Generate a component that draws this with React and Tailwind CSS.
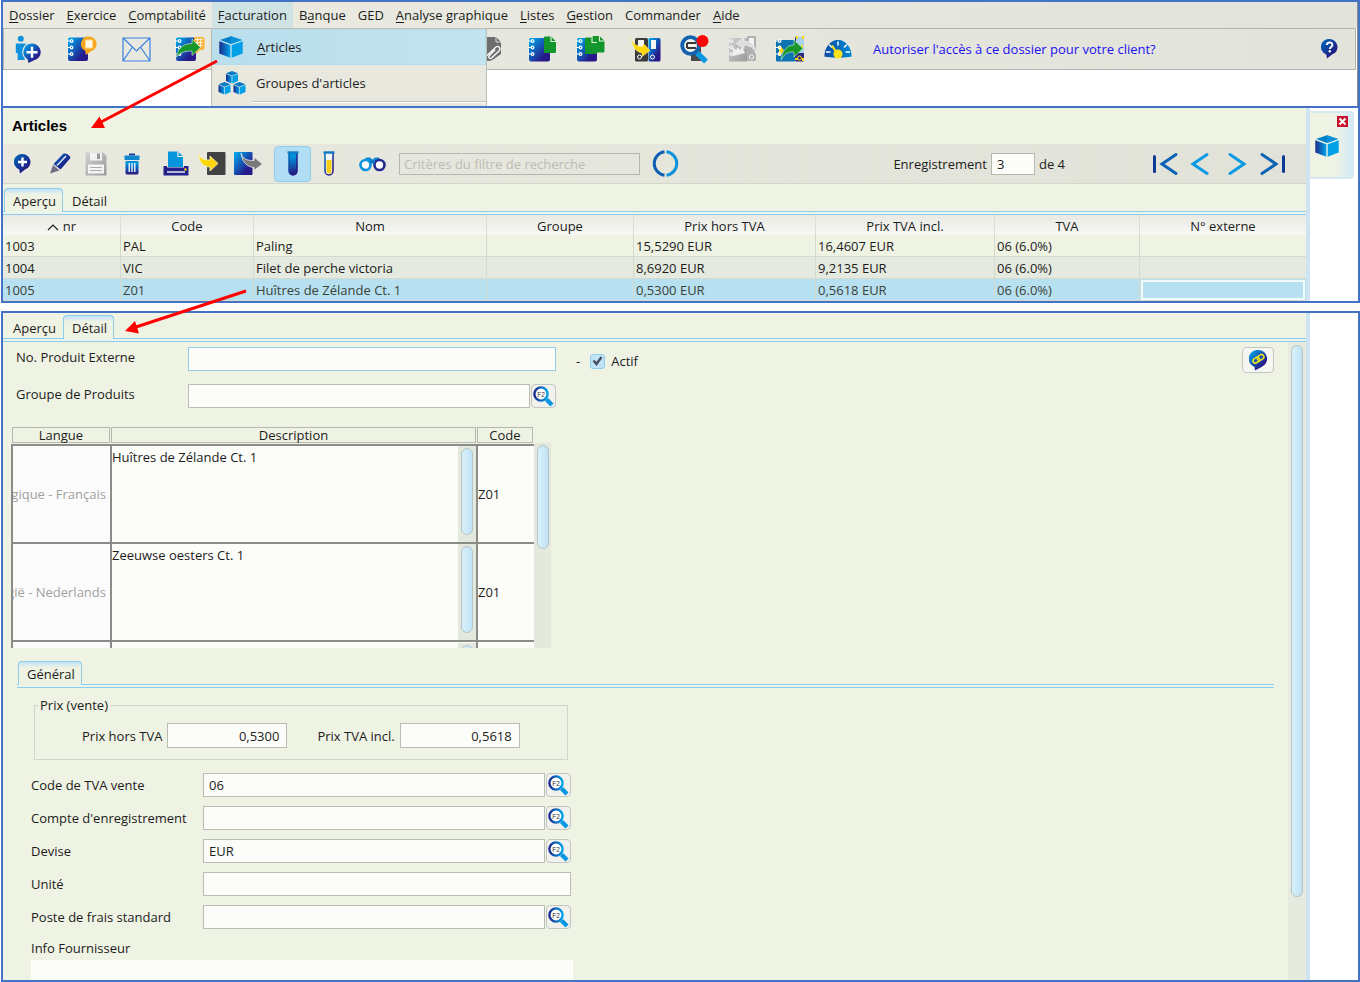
import React, { useState } from "react";

const MENUS = [
  { label: "Dossier", key: 0 },
  { label: "Exercice", key: 0 },
  { label: "Comptabilité", key: 0 },
  { label: "Facturation", key: 0, open: true },
  { label: "Banque", key: 1 },
  { label: "GED" },
  { label: "Analyse graphique", key: 0 },
  { label: "Listes", key: 0 },
  { label: "Gestion", key: 0 },
  { label: "Commander" },
  { label: "Aide", key: 0 },
];

const COLUMNS = [
  { label: "nr", width: "w-[118px]", sorted: true },
  { label: "Code", width: "w-[133px]" },
  { label: "Nom", width: "w-[233px]" },
  { label: "Groupe", width: "w-[147px]" },
  { label: "Prix hors TVA", width: "w-[182px]" },
  { label: "Prix TVA incl.", width: "w-[179px]" },
  { label: "TVA", width: "w-[145px]" },
  { label: "N° externe", width: "w-auto" },
];

const ARTICLES = [
  ["1003", "PAL", "Paling", "", "15,5290 EUR", "16,4607 EUR", "06 (6.0%)", ""],
  ["1004", "VIC", "Filet de perche victoria", "", "8,6920 EUR", "9,2135 EUR", "06 (6.0%)", ""],
  ["1005", "Z01", "Huîtres de Zélande Ct. 1", "", "0,5300 EUR", "0,5618 EUR", "06 (6.0%)", ""],
];

const DESCRIPTIONS = [
  { lang: "Belgique - Français", text: "Huîtres de Zélande Ct. 1", code: "Z01" },
  { lang: "België - Nederlands", text: "Zeeuwse oesters Ct. 1", code: "Z01" },
  { lang: "", text: "", code: "" },
];

const FIELDS = [
  { id: "tva", label: "Code de TVA vente", value: "06", lookup: true },
  { id: "compte", label: "Compte d'enregistrement", value: "", lookup: true },
  { id: "devise", label: "Devise", value: "EUR", lookup: true },
  { id: "unite", label: "Unité", value: "" },
  { id: "frais", label: "Poste de frais standard", value: "", lookup: true },
];

/* ---------- icons ---------- */

// shared gradients, referenced by every icon below
const Gradients = () => (
  <svg className="absolute h-0 w-0" aria-hidden="true">
    <defs>
      <linearGradient id="blue" x1="0" y1="0" x2="1" y2="1">
        <stop offset="0.1" stopColor="#009ee6" />
        <stop offset="0.75" stopColor="#26198a" />
      </linearGradient>
      <linearGradient id="deep" x1="0" y1="0" x2="1" y2="1">
        <stop offset="0" stopColor="#0070bf" />
        <stop offset="0.8" stopColor="#23157f" />
      </linearGradient>
      <linearGradient id="side" x1="0" y1="0" x2="1" y2="0">
        <stop offset="0" stopColor="#1b2c8c" />
        <stop offset="1" stopColor="#00a3ea" />
      </linearGradient>
      <linearGradient id="down" x1="0" y1="0" x2="0" y2="1">
        <stop offset="0.2" stopColor="#0090d8" />
        <stop offset="1" stopColor="#2b1580" />
      </linearGradient>
      <linearGradient id="gray" x1="0" y1="0" x2="1" y2="1">
        <stop offset="0" stopColor="#d2d2d2" />
        <stop offset="1" stopColor="#9a9a9a" />
      </linearGradient>
    </defs>
  </svg>
);

const Svg = ({ w, h, children }) => (
  <svg width={w} height={h} viewBox={`0 0 ${w} ${h}`} fill="none" aria-hidden="true">
    {children}
  </svg>
);

const Rings = ({ color = "#fff" }) => (
  <g stroke={color} strokeWidth="1.2" fill="none">
    <path d="M0 5h3.5M0 11.500h3.500M0 18h3.500" />
    <circle cx="4.600" cy="5" r="1.300" />
    <circle cx="4.600" cy="11.500" r="1.300" />
    <circle cx="4.600" cy="18" r="1.300" />
  </g>
);

const CubeIcon = ({ w = 24, h = 22 }) => (
  <svg width={w} height={h} viewBox="0 0 24 22" fill="none" aria-hidden="true">
    <path d="M12 0.300 23 4 12 8 1 4Z" fill="#0080c8" />
    <path d="M12 0.300 23 4 12 8Z" fill="#0a93db" />
    <path d="M0.300 5.300 11.300 9.200V21.700L0.300 17.500Z" fill="url(#side)" />
    <path d="M12.700 9.200 23.700 5.300V17.500L12.700 21.700Z" fill="#00a0e9" />
  </svg>
);

const CubesIcon = () => (
  <Svg w={28} h={24}>
    {[[8, 0], [0.500, 11], [15.500, 11]].map(([x, y]) => (
      <g key={x} transform={`translate(${x} ${y})`}>
        <path d="M6 0 12 2.300 6 4.800 0 2.300Z" fill="#0b7ac4" />
        <path d="M0 3 5.700 5.300V12.500L0 10Z" fill="url(#side)" />
        <path d="M6.300 5.300 12 3V10L6.300 12.500Z" fill="#00a0e9" />
      </g>
    ))}
  </Svg>
);

const PersonAddIcon = () => (
  <Svg w={26} h={28}>
    <circle cx="5.800" cy="3.800" r="3" fill="#1292dc" />
    <path d="M0.800 8.500h10l-1 9.500v7H2.600v-7H0.800Z" fill="#1292dc" />
    <circle cx="17" cy="17" r="9.800" fill="#e8e8df" />
    <path d="M17 8.500a8.500 8.500 0 0 1 1.500 16.900L13.500 28l-1-3.800A8.500 8.500 0 0 1 17 8.500Z" fill="url(#blue)" />
    <path d="M17 11.800v11M11.500 17.300h11" stroke="#fff" strokeWidth="2.400" />
  </Svg>
);

const NotebookNoteIcon = () => (
  <Svg w={30} h={26}>
    <rect x="1" y="1.500" width="20" height="23.500" rx="2" fill="url(#blue)" />
    <Rings />
    <path d="M22 0.500a7.500 7.500 0 0 1 2.500 14.600L19 19l-1-4.400A7.500 7.500 0 0 1 22 0.500Z" fill="#f6a51c" />
    <path d="M18.500 4h7v8h-7Z" fill="#fff8e6" stroke="#ffd98a" />
  </Svg>
);

const MailIcon = () => (
  <Svg w={29} h={25}>
    <path d="M1 1h27v23H1ZM1 1l13.500 13L28 1M1 24l9.500-14M28 24l-9.500-14" stroke="#3b82e0" strokeWidth="1.200" />
  </Svg>
);

const NotebookSendIcon = () => (
  <Svg w={30} h={26}>
    <rect x="1" y="1.500" width="20" height="23.500" rx="2" fill="url(#blue)" />
    <Rings />
    <path d="M19 1h8a2.500 2.500 0 0 1 2.500 2.500V11a3 3 0 0 1-3 3H25l-4 4-1-4h-1Z" fill="#f9b233" />
    <path d="M20 3.500h8M20 6.500h8M20 9.500h8M22.500 2v9M25.500 2v9" stroke="#fff" strokeWidth="0.800" />
    <path d="M1 21.500C3 12 8 7.500 17 7.500V3l8.500 8.500-8.500 8V15C10.500 15 5 16 1 21.500Z" fill="#17962c" stroke="#e9f6e6" strokeWidth="0.600" />
  </Svg>
);

const AttachIcon = () => (
  <Svg w={26} h={26}>
    <path d="M2 2h10v22H2Z" fill="url(#blue)" />
    <path d="M10 1h9l5 5v12l-7 5-4 2h-3Z" fill="#6d6d6d" />
    <path d="M19 1v5h5" stroke="#ddd" />
    <path d="M10 19.500 19 11a2.500 2.500 0 0 1 3.500 3.500l-8 7.500a1.600 1.600 0 0 1-2.300-2.300l6-6" stroke="#fff" strokeWidth="1.300" />
  </Svg>
);

const Page = ({ x, y }) => (
  <g transform={`translate(${x} ${y})`}>
    <path d="M0 1a1 1 0 0 1 1-1h6l5 5v10a1.500 1.500 0 0 1-1.500 1.500H0Z" fill="#12962b" />
    <path d="M7 0v5h5" stroke="#e2f2e0" strokeWidth="1.100" />
  </g>
);

const NotebookPageIcon = () => (
  <Svg w={29} h={26}>
    <rect x="1" y="2" width="21" height="23.500" rx="2" fill="url(#blue)" />
    <Rings />
    <Page x={16} y={0.500} />
  </Svg>
);

const NotebookPagesIcon = () => (
  <Svg w={29} h={26}>
    <rect x="1" y="2" width="20" height="23.500" rx="2" fill="url(#blue)" />
    <Rings />
    <Page x={16.500} y={0} />
    <Page x={9} y={1.500} />
  </Svg>
);

const BinderImportIcon = () => (
  <Svg w={30} h={26}>
    <rect x="4" y="2" width="13" height="23.500" rx="1.500" fill="#3b3b3b" />
    <rect x="17.500" y="2" width="12" height="23.500" rx="1.500" fill="url(#blue)" />
    <path d="M7 4h6v8H7ZM20 4h5v9h-5Z" fill="#f5f5f5" />
    <circle cx="8.500" cy="21" r="2" stroke="#fff" />
    <circle cx="21.500" cy="21" r="2" stroke="#fff" />
    <path d="M0.500 2C2 8.500 6 10.500 12 10.500V7l7 7.500-8 6V17C5 16 1 11 0.500 2Z" fill="#ffd60a" stroke="#fff3b0" strokeWidth="0.500" />
  </Svg>
);

const SearchAlertIcon = () => (
  <Svg w={29} h={29}>
    <path d="M11 7h10v19H11Z" fill="#4a4a4a" />
    <circle cx="10.500" cy="10.500" r="8.300" fill="#f2f2ee" stroke="#1362ae" strokeWidth="3.800" />
    <path d="M7 8h9M7 13h9M7 8v5" stroke="#3a3a3a" strokeWidth="2" />
    <path d="m17 18 9 8.500" stroke="#0a97e2" strokeWidth="5.500" />
    <circle cx="22.500" cy="6" r="6" fill="#fb0505" />
  </Svg>
);

const ReturnIcon = () => (
  <Svg w={30} h={26}>
    <rect x="2" y="2" width="18" height="23.500" rx="1" fill="url(#gray)" />
    <rect x="20" y="0" width="9" height="25" rx="1" fill="#b0b0b0" />
    <path d="M22 2h5v9h-5Z" fill="#f4f4f4" />
    <circle cx="24.500" cy="21" r="2.200" stroke="#f4f4f4" />
    <Rings color="#f0f0f0" />
    <path d="M6 20V11l3 3 2-3 2 3 2-3 3 6" fill="#f1f1f1" />
    <path d="M29 18C27 11 22 9 17 9.500V13L9 7.500 17 1v4c7 0 12 4 12 13Z" fill="#dedede" stroke="#f4f4f4" strokeWidth="0.500" />
  </Svg>
);

const TransferIcon = () => (
  <Svg w={30} h={26}>
    <rect x="1" y="4" width="19" height="21.500" rx="1" fill="#0d74b2" />
    <rect x="20" y="1" width="9" height="24.500" rx="1" fill="#2a2a86" />
    <path d="M4 20V9l5 5-4 6Z" fill="#ffd60a" />
    <path d="M21 1h8v16h-8Z" fill="#a9d3ec" />
    <path d="M22 0v3M28 0v3M27 9v3M20 23h3M28 22v3" stroke="#ffd60a" strokeWidth="2" />
    <circle cx="24.500" cy="22" r="2" stroke="#ffd60a" />
    <Rings />
    <path d="M6 24C8 13 13 9 19 9V4l9 8.500-9 8.500V16C14 15.500 10 17 6 24Z" fill="#17962c" stroke="#d7f0d5" strokeWidth="0.600" />
  </Svg>
);

const GaugeIcon = () => (
  <Svg w={28} h={20}>
    <path d="M0.500 17.500a13.500 16.500 0 0 1 27 0c-8 1.500-19 1.500-27 0Z" fill="url(#side)" />
    <path d="M0.500 17.500a13.500 16.500 0 0 1 27 0c-8 1.500-19 1.500-27 0Z" fill="#0070c0" opacity="0.500" />
    <path d="M2 13h4.500M5 5.500l3 3M14 2.500v4M23 5.500l-3 3M26 13h-4.500" stroke="#fff" strokeWidth="1.500" />
    <path d="m8 6.500 5 8" stroke="#ffe11a" strokeWidth="2.200" />
    <circle cx="14" cy="15" r="4.500" fill="#ffe11a" />
  </Svg>
);

const Bubble = ({ fill = "url(#deep)" }) => (
  <path d="M8.500 0a8 8 0 0 1 2.500 15.600L6 19.500l-0.800-4A8 8 0 0 1 8.500 0Z" fill={fill} />
);

const HelpIcon = () => (
  <Svg w={17} h={20}>
    <Bubble />
    <path d="M5.800 6c0-3.400 5.600-3.400 5.600 0 0 2-2.600 2-2.600 4" stroke="#fff" strokeWidth="1.900" />
    <circle cx="8.800" cy="12.300" r="1.200" fill="#fff" />
  </Svg>
);

const AddIcon = () => (
  <Svg w={17} h={20}>
    <Bubble />
    <path d="M8.500 3.500v9M4 8h9" stroke="#fff" strokeWidth="2.400" />
  </Svg>
);

const LinkBubbleIcon = () => (
  <Svg w={19} h={21}>
    <path d="M9.500 0a8.800 8.800 0 0 1 3 17L6 20.500 5.500 17A8.800 8.800 0 0 1 9.500 0Z" fill="url(#blue)" />
    <g stroke="#e9e31e" strokeWidth="1.600" transform="rotate(-32 9.500 9)">
      <rect x="3.500" y="6.500" width="7" height="4.600" rx="2.300" />
      <rect x="8.500" y="6.500" width="7" height="4.600" rx="2.300" />
    </g>
  </Svg>
);

const PencilIcon = () => (
  <Svg w={21} h={21}>
    <path d="M0 20.500 3 12l6.500 5.500Z" fill="#6f6f86" />
    <path d="m3.500 11 9.500-10c3-1.500 7 1.500 7.500 4L10.500 16.500Z" fill="url(#deep)" />
    <path d="m7 12.500 9-9.500" stroke="#dfe9f5" strokeWidth="1.500" />
  </Svg>
);

const SaveIcon = () => (
  <Svg w={22} h={24}>
    <path d="M0.500 0.500H18l3.500 3.500v19.500h-21Z" fill="url(#gray)" />
    <path d="M5 0.500h12v8H5Z" fill="#f1f1f1" />
    <path d="M12 1.500h3v5.500h-3Z" fill="#9a9a9a" />
    <path d="M3 12.500h16v9H3Z" fill="#f4f4f4" />
    <path d="M5 15.500h12M5 18.500h12" stroke="#ababab" />
  </Svg>
);

const TrashIcon = () => (
  <Svg w={16} h={22}>
    <path d="M5 0.500h6v2H5Z" fill="#1d3a9a" />
    <path d="M0.500 2.500h15V7h-15Z" fill="#1285cf" />
    <path d="M1.500 8h13V20a1.500 1.500 0 0 1-1.500 1.500H3A1.500 1.500 0 0 1 1.500 20Z" fill="url(#down)" />
    <path d="M5.200 10v9M8 10v9M10.800 10v9" stroke="#fff" strokeWidth="1.300" />
  </Svg>
);

const PrintIcon = () => (
  <Svg w={26} h={25}>
    <path d="M5 0.500h10l5 5V16H5Z" fill="#0695dc" />
    <path d="M15 0.500v5h5" stroke="#e5f2f8" strokeWidth="1.200" />
    <path d="M0.500 15H4v1.500h17V15h4.500v9.500h-25Z" fill="#24208c" />
    <path d="M4 21h18" stroke="#e7e9ef" strokeWidth="1.500" />
    <circle cx="22.500" cy="18.500" r="1.200" fill="#ffd60a" />
  </Svg>
);

const ImportIcon = () => (
  <Svg w={28} h={23}>
    <rect x="9" y="0" width="18.500" height="23" rx="1" fill="#424242" />
    <path d="M0 1C2 7 6 8 12 8V4l8 7.500-8 7.500V15C5 15 1 10 0 1Z" fill="#ffd60a" stroke="#f6f1c4" strokeWidth="0.800" />
  </Svg>
);

const ExportIcon = () => (
  <Svg w={29} h={23}>
    <rect x="0" y="0" width="18.500" height="23" rx="1" fill="url(#blue)" />
    <path d="M7 1c2 6 5 7.500 13 7.500V5l8.500 7-8.500 6.500V15.500C13 15 8 10 7 1Z" fill="#7a7a7a" stroke="#eee" strokeWidth="0.800" />
  </Svg>
);

const TubeIcon = ({ yellow }) => (
  <Svg w={12} h={25}>
    <path d="M2 1.500V20a4 4 0 0 0 8 0V1.500Z" fill={yellow ? "#f3f6f2" : "url(#down)"} stroke="url(#deep)" strokeWidth="1.500" />
    {yellow && <path d="M3.500 9h5v11a2.500 2.500 0 0 1-5 0Z" fill="#f5cf15" />}
    <path d="M0.500 1.500h11" stroke="#0f7cc4" strokeWidth="2.200" />
  </Svg>
);

const BinocularsIcon = () => (
  <Svg w={27} h={16}>
    <path d="M7 1.500h4l2.500 2L16 1.500h4l2 4H5Z" fill="#0f8ad4" />
    <circle cx="6.500" cy="9" r="5" fill="#fff" stroke="#0b93dc" strokeWidth="2.600" />
    <circle cx="20.500" cy="9" r="5" fill="#fff" stroke="#262a92" strokeWidth="2.600" />
    <path d="M11 6h5" stroke="#1276c4" strokeWidth="3" />
  </Svg>
);

const RefreshIcon = () => (
  <Svg w={27} h={27}>
    <path d="M12.500 1.800a11.800 11.800 0 0 0 0 23.400" stroke="#0f5fb0" strokeWidth="3" />
    <path d="M14.500 1.800a11.800 11.800 0 0 1 0 23.400" stroke="#0b93dc" strokeWidth="3" />
  </Svg>
);

const NavIcon = ({ back, end }) => (
  <Svg w={26} h={24}>
    <g transform={back ? undefined : "matrix(-1 0 0 1 26 0)"} strokeLinecap="round" strokeWidth="3">
      {end && <path d="M2.500 4.500v15" stroke="#0c3a97" />}
      <path d="M24 2.500 10 12l14 9.500" stroke={end ? "#0a62b4" : "#0b9ae3"} />
    </g>
  </Svg>
);

const LookupIcon = () => (
  <Svg w={21} h={21}>
    <path d="m13.500 13.500 5.500 5.500" stroke="#0797e2" strokeWidth="4.400" />
    <circle cx="8" cy="8" r="6.600" fill="#fff" stroke="url(#side)" strokeWidth="2.400" />
    <text x="8" y="10.500" textAnchor="middle" fontSize="6.500" fontFamily="Liberation Sans, sans-serif" fill="#333">F2</text>
  </Svg>
);

/* ---------- small building blocks ---------- */

const IconButton = ({ label, className = "", children }) => (
  <button type="button" aria-label={label} className={`flex shrink-0 items-center justify-center ${className}`}>
    {children}
  </button>
);

const Mnemonic = ({ text, at }) => {
  if (at === undefined) return text;
  return (
    <>
      {text.slice(0, at)}
      <u className="underline-offset-2">{text[at]}</u>
      {text.slice(at + 1)}
    </>
  );
};

const inputStyle = "h-6 min-w-0 border border-[#b9bdb4] bg-[#fcfdf9] px-[5px] text-[13px] outline-none";

const Tabs = ({ items, active, onSelect }) => (
  <div className="border-b border-[#8fcdea]">
    <div className="flex h-6 border-b border-[#8fcdea] pl-px">
      {items.map((t) => (
        <button
          key={t}
          type="button"
          onClick={() => onSelect?.(t)}
          className={
            t === active
              ? "-mb-px h-6 rounded-t border border-b-0 border-[#8fcdea] bg-linear-to-b from-[#bfe4f5] to-[#eff3e4] to-25% pr-[6px] pl-2"
              : "h-6 pt-px pr-[7px] pl-[9px]"
          }
        >
          {t}
        </button>
      ))}
    </div>
    <div className="h-0.5 bg-[#e9f4ee]" />
  </div>
);

const Thumb = ({ className }) => (
  <div className={`w-3 rounded-full border border-[#b5c4c6] bg-linear-to-r from-[#d9f0fb] to-[#bfe3f4] ${className}`} />
);

const LookupButton = ({ label }) => (
  <IconButton label={label} className="ml-px h-6 w-[25px] rounded-sm border border-[#c3c6c0] bg-[#f1f2ee]">
    <LookupIcon />
  </IconButton>
);

/* ---------- page parts ---------- */

const MainWindow = () => (
  <section className="relative border-2 border-[#4472c4] bg-white">
    <div className="border-r border-[#8f8f8f]">
      <nav className="flex h-[26px] bg-linear-to-r from-[#ebebe2] to-[#e2e3da]">
        {MENUS.map((m) => (
          <button
            key={m.label}
            type="button"
            className={m.open ? "bg-[#cfe3e4] px-[6px]" : "px-[6px]"}
          >
            <Mnemonic text={m.label} at={m.key} />
          </button>
        ))}
      </nav>
      <div className="mr-px flex h-[42px] items-center border border-[#b4b5ae] bg-linear-to-r from-[#e9e9e0] to-[#e2e3da]">
        <IconButton label="Ajouter un client" className="w-12"><PersonAddIcon /></IconButton>
        <IconButton label="Note" className="ml-[3px] w-[54px]"><NotebookNoteIcon /></IconButton>
        <IconButton label="Courrier" className="w-[54px]"><MailIcon /></IconButton>
        <IconButton label="Envoyer" className="w-[54px]"><NotebookSendIcon /></IconButton>
        <IconButton label="Pièce jointe" className="ml-[249px] w-12"><AttachIcon /></IconButton>
        <IconButton label="Document" className="ml-1 w-12"><NotebookPageIcon /></IconButton>
        <IconButton label="Documents" className="w-12"><NotebookPagesIcon /></IconButton>
        <IconButton label="Importer" className="ml-2 w-12"><BinderImportIcon /></IconButton>
        <IconButton label="Contrôle" className="w-12"><SearchAlertIcon /></IconButton>
        <IconButton label="Retour" className="w-12"><ReturnIcon /></IconButton>
        <IconButton label="Transfert" className="w-12"><TransferIcon /></IconButton>
        <IconButton label="Tableau de bord" className="w-12"><GaugeIcon /></IconButton>
        <a href="#acces" className="ml-[11px] flex-1 text-[#1d10f5]">
          Autoriser l'accès à ce dossier pour votre client?
        </a>
        <IconButton label="Aide" className="mr-[17px]"><HelpIcon /></IconButton>
      </div>
      <div className="h-9" />
    </div>

    {/* opened "Facturation" menu */}
    <div className="absolute top-[26px] left-[208px] h-[78px] w-[276px] overflow-hidden border border-b-0 border-[#bdbeb6] bg-[#e8e8df]">
      <button type="button" className="flex h-9 w-full items-center border border-[#b5dceb] bg-linear-to-r from-[#b9deec] to-[#c3e3ef] pl-[6px]">
        <span className="w-[38px]"><CubeIcon /></span>
        <Mnemonic text="Articles" at={0} />
      </button>
      <button type="button" className="flex h-9 w-full items-center pl-[6px]">
        <span className="w-[38px]"><CubesIcon /></span>
        Groupes d'articles
      </button>
      <div className="ml-10 border-t border-[#c3c4bc] bg-white pt-px" />
    </div>
  </section>
);

const Toolbar = () => (
  <div className="flex h-10 items-center border-b border-[#d6d7cc] bg-linear-to-r from-[#e9e9e0] to-[#e1e2d8]">
    <IconButton label="Nouveau" className="w-[39px]"><AddIcon /></IconButton>
    <IconButton label="Modifier" className="w-9"><PencilIcon /></IconButton>
    <IconButton label="Enregistrer" className="w-9"><SaveIcon /></IconButton>
    <IconButton label="Supprimer" className="w-9"><TrashIcon /></IconButton>
    <IconButton label="Imprimer" className="ml-2 w-9"><PrintIcon /></IconButton>
    <IconButton label="Importer" className="w-9"><ImportIcon /></IconButton>
    <IconButton label="Exporter" className="w-9"><ExportIcon /></IconButton>
    <IconButton label="Articles actifs" className="ml-2 h-9 w-[37px] rounded-sm border border-[#8fcdea] bg-[#b2def5]">
      <TubeIcon />
    </IconButton>
    <IconButton label="Tous les articles" className="w-9"><TubeIcon yellow /></IconButton>
    <IconButton label="Rechercher" className="ml-[6px] w-[38px]"><BinocularsIcon /></IconButton>
    <input
      type="text"
      aria-label="Filtre"
      placeholder="Critères du filtre de recherche"
      className="ml-2 h-[22px] w-[241px] border border-[#b6b8b0] px-1 text-[13px] outline-none placeholder:text-[#bcbdb8]"
    />
    <IconButton label="Actualiser" className="ml-3"><RefreshIcon /></IconButton>
    <div className="ml-auto flex items-center">
      <label htmlFor="record">Enregistrement</label>
      <input id="record" type="text" defaultValue="3" className="mx-1 h-[22px] w-11 border border-[#b6b8b0] bg-[#fcfdf9] px-[5px] text-[13px] outline-none" />
      <span>de 4</span>
    </div>
    <div className="mr-5 ml-[87px] flex">
      <IconButton label="Premier"><NavIcon back end /></IconButton>
      <IconButton label="Précédent" className="ml-[5px]"><NavIcon back /></IconButton>
      <IconButton label="Suivant" className="ml-[19px]"><NavIcon /></IconButton>
      <IconButton label="Dernier" className="ml-[6px]"><NavIcon end /></IconButton>
    </div>
  </div>
);

const ArticlesTable = () => (
  <table className="w-full table-fixed border-separate border-spacing-0">
    <thead>
      <tr className="h-5 bg-linear-to-b from-[#e9eae3] to-[#f7f8f4]">
        {COLUMNS.map((c) => (
          <th key={c.label} className={`h-5 border-r border-[#dcded5] p-0 pt-[2px] font-normal leading-[18px] last:border-r-0 ${c.width}`}>
            {c.sorted && (
              <svg className="mr-1 inline" width="12" height="7" viewBox="0 0 12 7" fill="none" aria-hidden="true">
                <path d="M1 6 6 1l5 5" stroke="#222" strokeWidth="1.200" />
              </svg>
            )}
            {c.label}
          </th>
        ))}
      </tr>
    </thead>
    <tbody>
      {ARTICLES.map((row, i) => {
        const selected = i === 2;
        const tone = selected ? "bg-[#b7e0f0] text-[#3b4238]" : i % 2 ? "bg-[#e4eadf]" : "bg-[#eff3e4]";
        return (
          <tr key={row[0]} className={tone}>
            {row.map((cell, j) => (
              <td
                key={j}
                className={`h-[22px] truncate border-r border-b border-[#d5dacd] py-0 pr-0 pl-0.5 leading-5 last:border-r-0 ${
                  selected && j === 7 ? "outline-2 -outline-offset-3 outline-[#f3fafa]" : ""
                }`}
              >
                {cell}
              </td>
            ))}
          </tr>
        );
      })}
    </tbody>
  </table>
);

const SideStrip = ({ children }) => (
  <aside className="flex w-[52px] shrink-0">
    <div className="w-1 bg-[#cfe4f2]" />
    <div className="flex-1 bg-white">{children}</div>
  </aside>
);

const ArticlesWindow = () => (
  <section className="-mt-0.5 flex border-2 border-[#4472c4]">
    <div className="min-w-0 flex-1 bg-[#eff3e4]">
      <h1 className="flex h-9 items-center pl-[9px] font-['Liberation_Sans',sans-serif] text-[15px] font-bold text-black">
        Articles
      </h1>
      <Toolbar />
      <div className="pt-1">
        <Tabs items={["Aperçu", "Détail"]} active="Aperçu" />
      </div>
      <ArticlesTable />
    </div>
    <SideStrip>
      <div className="mt-[3px] mr-1 flex h-[68px] flex-col rounded-r-sm border-2 border-l-0 border-[#d5e8f4] bg-linear-to-r from-[#eff3e4] from-60% to-[#d3ebf6]">
        <IconButton label="Fermer" className="mt-[3px] mr-1 size-[11px] self-end bg-[#c8102e]">
          <Svg w={9} h={9}>
            <path d="m1.500 1.500 6 6M7.500 1.500l-6 6" stroke="#fff" strokeWidth="2" />
          </Svg>
        </IconButton>
        <IconButton label="Articles" className="mt-2 ml-[5px] self-start"><CubeIcon /></IconButton>
      </div>
    </SideStrip>
  </section>
);

const DescriptionTable = () => (
  <div className="mt-[19px] ml-2 flex h-[221px] w-[540px] overflow-hidden">
    <table className="h-[310px] w-[522px] table-fixed border-collapse">
      <thead>
        <tr>
          {[["Langue", "w-[99px]"], ["Description", "w-[366px]"], ["Code", "w-[57px]"]].map(([h, w]) => (
            <th key={h} className={`p-0 pr-px pb-px font-normal ${w}`}>
              <div className="h-4 border border-[#b5b8af] leading-[15px]">{h}</div>
            </th>
          ))}
        </tr>
      </thead>
      <tbody>
        {DESCRIPTIONS.map((d, i) => (
          <tr key={i}>
            <td className="h-[98px] border-t-2 border-l-2 border-[#8b8c87] bg-[#fbfbfb] p-0">
              <div className="flex justify-end overflow-hidden pr-1 whitespace-nowrap text-[#9fa19f]">{d.lang}</div>
            </td>
            <td className="h-[98px] border-t-2 border-l-2 border-[#8b8c87] bg-[#fcfdf9] p-0">
              <div className="flex h-24">
                <textarea
                  aria-label="Description"
                  defaultValue={d.text}
                  className="h-full flex-1 resize-none overflow-hidden pt-px text-[13px] leading-5 outline-none"
                />
                <div className="flex w-[18px] justify-center bg-[#e4e9dd] pt-0.5">
                  <Thumb className="h-[87px]" />
                </div>
              </div>
            </td>
            <td className="h-[98px] border-t-2 border-l-2 border-[#8b8c87] bg-[#fcfdf9] p-0">
              <input type="text" aria-label="Code" defaultValue={d.code} className="w-full text-[13px] outline-none" />
            </td>
          </tr>
        ))}
      </tbody>
    </table>
    <div className="mt-4 flex w-[18px] justify-center bg-[#e4e9dd] pt-0.5">
      <Thumb className="h-[104px]" />
    </div>
  </div>
);

const PriceField = ({ id, label, value, className = "" }) => (
  <div className={`flex items-center gap-[5px] ${className}`}>
    <label htmlFor={id}>{label}</label>
    <input id={id} type="text" defaultValue={value} className="h-[25px] w-[120px] border border-[#b9bdb4] bg-[#fcfdf9] px-[7px] text-right text-[13px] outline-none" />
  </div>
);

const GeneralTab = () => (
  <div className="pl-7">
    <fieldset className="mt-[9px] ml-[3px] w-[534px] border border-[#d3d7ca] pb-[11px]">
      <legend className="ml-[3px] px-0.5 leading-4">Prix (vente)</legend>
      <div className="flex pt-[10px] pl-[47px]">
        <PriceField id="horsTva" label="Prix hors TVA" value="0,5300" />
        <PriceField id="tvaIncl" label="Prix TVA incl." value="0,5618" className="ml-[30px]" />
      </div>
    </fieldset>
    <div className="mt-[13px] flex flex-col gap-[9px]">
      {FIELDS.map((f) => (
        <div key={f.id} className="flex w-[540px] items-center">
          <label htmlFor={f.id} className="w-[172px] shrink-0">{f.label}</label>
          <input id={f.id} type="text" defaultValue={f.value} className={`${inputStyle} flex-1`} />
          {f.lookup && <LookupButton label={`Rechercher ${f.label}`} />}
        </div>
      ))}
    </div>
    <label htmlFor="info" className="mt-[9px] block leading-5">Info Fournisseur</label>
    <textarea id="info" className="mt-0.5 block h-5 w-[542px] resize-none bg-[#fcfdf9] outline-none" />
  </div>
);

const DetailForm = () => {
  const [active, setActive] = useState(true);

  return (
    <div className="min-w-0 flex-1 pr-[14px]">
      <div className="flex items-start pt-[5px] pl-[13px]">
        <label htmlFor="externe" className="w-[172px] leading-5">No. Produit Externe</label>
        <input id="externe" type="text" className="h-6 w-[368px] border border-[#8fcdea] bg-[#fcfdf9] px-[5px] outline-none" />
        <span className="ml-5 leading-7">-</span>
        <label className="ml-[10px] flex items-center gap-[6px] leading-7">
          <span className="grid place-items-center">
            <input
              type="checkbox"
              checked={active}
              onChange={(e) => setActive(e.target.checked)}
              className="col-start-1 row-start-1 size-[15px] appearance-none rounded-[3px] border border-[#8fcdea] bg-[#c0e4f6]"
            />
            {active && (
              <svg className="pointer-events-none col-start-1 row-start-1" width="11" height="10" viewBox="0 0 11 10" fill="none" aria-hidden="true">
                <path d="m1.500 4.500 3 3.500 5-7" stroke="#4b4f63" strokeWidth="2.400" />
              </svg>
            )}
          </span>
          Actif
        </label>
        <IconButton label="Lien" className="ml-auto h-[26px] w-8 rounded border border-[#c3c6c0] bg-[#f5f6f2]">
          <LinkBubbleIcon />
        </IconButton>
      </div>
      <div className="mt-[9px] flex items-start pl-[13px]">
        <label htmlFor="groupe" className="w-[172px] leading-5">Groupe de Produits</label>
        <input id="groupe" type="text" className={`${inputStyle} w-[342px]`} />
        <LookupButton label="Rechercher un groupe" />
      </div>
      <DescriptionTable />
      <div className="mt-[13px] ml-[14px]">
        <Tabs items={["Général"]} active="Général" />
      </div>
      <GeneralTab />
    </div>
  );
};

const DetailWindow = () => (
  <section className="mt-2 flex flex-1 border-2 border-[#4472c4]">
    <div className="flex min-w-0 flex-1 flex-col bg-[#eff3e4]">
      <div className="pt-0.5">
        <Tabs items={["Aperçu", "Détail"]} active="Détail" />
      </div>
      <div className="flex flex-1">
        <DetailForm />
        <div className="flex w-[18px] justify-center bg-[#e7ebdf] pt-[3px]">
          <Thumb className="h-[552px]" />
        </div>
      </div>
    </div>
    <SideStrip />
  </section>
);

// red pointers from the menu entry to its window, and from the row to its detail
const Pointers = () => (
  <svg className="pointer-events-none absolute top-0 left-0" width="260" height="340" viewBox="0 0 260 340" aria-hidden="true">
    <g stroke="#ff0000" strokeWidth="3" fill="#ff0000">
      <path d="M217 61 101 122" />
      <path d="M246 291 136 327" />
      <path d="m91 128 8.500-11.500 5.500 11.500Z" stroke="none" />
      <path d="m125 331 10-10 4 12.500Z" stroke="none" />
    </g>
  </svg>
);

const App = () => (
  <div className="relative flex min-h-screen flex-col bg-white pl-px font-['Open_Sans',sans-serif] text-[13px] leading-5 text-[#1c1c1c]">
    <Gradients />
    <MainWindow />
    <ArticlesWindow />
    <DetailWindow />
    <Pointers />
  </div>
);

export default App;
